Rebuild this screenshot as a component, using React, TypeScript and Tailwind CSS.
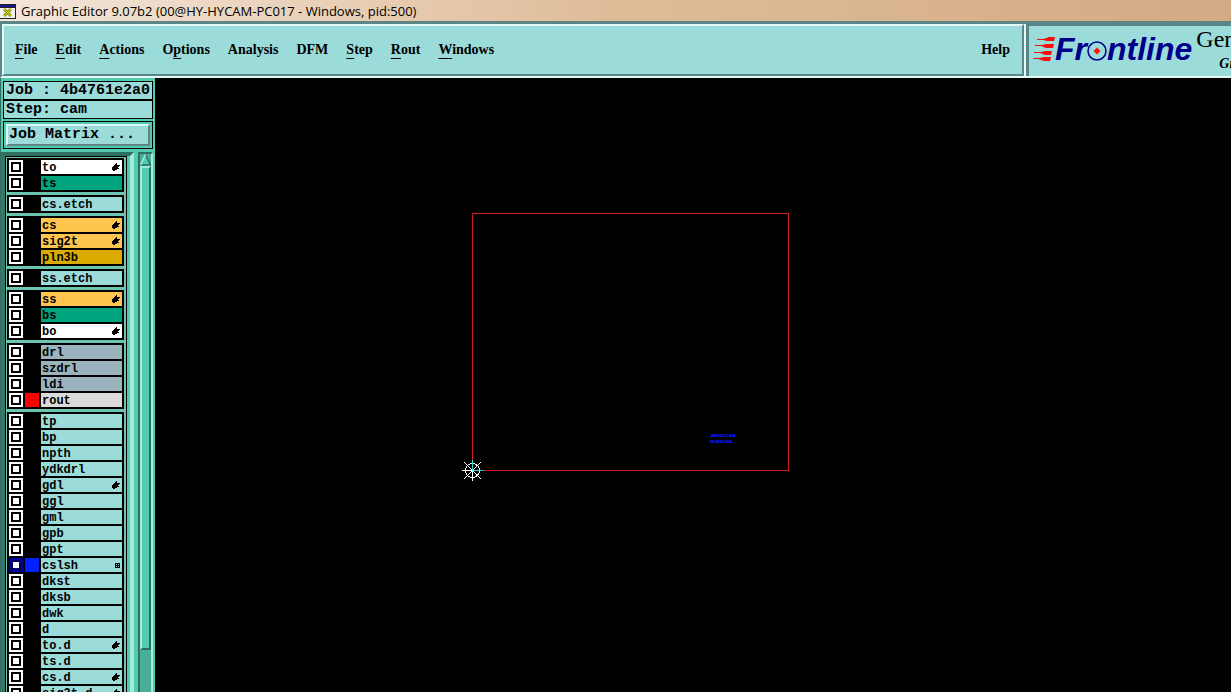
import React from "react";

type Mark = "hand" | "grid";
type Layer = { name: string; tone: string; mark?: Mark; swatch?: string; active?: boolean };

const AQUA = "bg-[#9bdbda]";
const GOLD = "bg-[#ffc54f]";
const GRAY = "bg-[#9ab3bd]";
const GREEN = "bg-[#00a47d]";

const aqua = (name: string, mark?: Mark): Layer => ({ name, tone: AQUA, mark });

const groups: Layer[][] = [
  [
    { name: "to", tone: "bg-white", mark: "hand" },
    { name: "ts", tone: GREEN },
  ],
  [aqua("cs.etch")],
  [
    { name: "cs", tone: GOLD, mark: "hand" },
    { name: "sig2t", tone: GOLD, mark: "hand" },
    { name: "pln3b", tone: "bg-[#dbab00]" },
  ],
  [aqua("ss.etch")],
  [
    { name: "ss", tone: GOLD, mark: "hand" },
    { name: "bs", tone: GREEN },
    { name: "bo", tone: "bg-white", mark: "hand" },
  ],
  [
    { name: "drl", tone: GRAY },
    { name: "szdrl", tone: GRAY },
    { name: "ldi", tone: GRAY },
    { name: "rout", tone: "bg-[#dadada]", swatch: "bg-[#ff0000]" },
  ],
  [
    aqua("tp"),
    aqua("bp"),
    aqua("npth"),
    aqua("ydkdrl"),
    aqua("gdl", "hand"),
    aqua("ggl"),
    aqua("gml"),
    aqua("gpb"),
    aqua("gpt"),
    { name: "cslsh", tone: AQUA, mark: "grid", swatch: "bg-[#0020ff]", active: true },
    aqua("dkst"),
    aqua("dksb"),
    aqua("dwk"),
    aqua("d"),
    aqua("to.d", "hand"),
    aqua("ts.d"),
    aqua("cs.d", "hand"),
    aqua("sig2t.d", "hand"),
  ],
];

const menus: { label: string; key: number }[] = [
  { label: "File", key: 0 },
  { label: "Edit", key: 0 },
  { label: "Actions", key: 0 },
  { label: "Options", key: 1 },
  { label: "Analysis", key: -1 },
  { label: "DFM", key: -1 },
  { label: "Step", key: 0 },
  { label: "Rout", key: 0 },
  { label: "Windows", key: 0 },
];

function HandIcon() {
  return (
    <svg width="8" height="8" viewBox="0 0 8 8" shapeRendering="crispEdges" aria-hidden="true">
      <path
        d="M4 0h1v2h3v1h-1v1h-1v1h1v1h-2v1h-2v1h-2v-1h-1v-3h1v-1h1v-1h1v-1h1z"
        fill="#000"
      />
    </svg>
  );
}

function GridIcon() {
  return (
    <svg width="5" height="5" viewBox="0 0 5 5" shapeRendering="crispEdges" aria-hidden="true">
      <path d="M0 0h5v5h-5zM1 1v1h1v-1zM3 1v1h1v-1zM1 3v1h1v-1zM3 3v1h1v-1z" fill="#000" fillRule="evenodd" />
    </svg>
  );
}

function WindowIcon() {
  return (
    <svg width="16" height="16" viewBox="0 0 16 16" shapeRendering="crispEdges" aria-hidden="true">
      <rect x="0" y="0" width="16" height="15" fill="#222" />
      <rect x="0" y="1" width="15" height="2" fill="#16168c" />
      <rect x="0" y="4" width="15" height="10" fill="#f4f4ee" />
      <path d="M4 5l7 7M11 5l-7 7" stroke="#8e9008" strokeWidth="3" shapeRendering="auto" />
      <path d="M4 5l7 7M11 5l-7 7" stroke="#e0e030" strokeWidth="1" shapeRendering="auto" />
    </svg>
  );
}

function MenuLabel({ label, index }: { label: string; index: number }) {
  if (index < 0) return <>{label}</>;
  return (
    <>
      {label.slice(0, index)}
      <span className="underline decoration-1 underline-offset-4">{label[index]}</span>
      {label.slice(index + 1)}
    </>
  );
}

function MenuBar() {
  return (
    <nav className="flex min-w-0 flex-1 items-center justify-between border-2 border-t-[#e4f8f6] border-l-[#e4f8f6] border-r-[#5b8587] border-b-[#5b8587] bg-[#9bdbda] pr-3 pl-[11px] text-sm font-bold">
      <div className="flex gap-[18px]">
        {menus.map((m) => (
          <button key={m.label} type="button">
            <MenuLabel label={m.label} index={m.key} />
          </button>
        ))}
      </div>
      <button type="button">Help</button>
    </nav>
  );
}

function Logo() {
  return (
    <div className="flex items-center pb-1">
      <svg width="22" height="26" viewBox="0 0 22 26" aria-hidden="true">
        <g stroke="#ff0a0a" strokeWidth="1">
          <path d="M4 3.500h10M2 9.500h10M1 16.500h10M0 22.500h10" />
        </g>
        <g fill="#ff0a0a">
          <path d="M8 3.500l6-1.500 1-1h7l-1 4h-7z M7 9.500l6-1.500h8l-1 4h-7z M6 16.500l6-1.500h7l-1 4h-6z M4 22.500l7-1.500h7l-1 4h-6z" />
        </g>
      </svg>
      <div className="flex items-center font-['Liberation_Sans',sans-serif] text-[32px] leading-8 font-bold text-[#00008b] italic">
        <span>Fr</span>
        <svg className="mt-1" width="20" height="20" viewBox="0 0 20 20" role="img" aria-label="o">
          <circle cx="10" cy="10" r="9" fill="none" stroke="#00008b" strokeWidth="1.5" />
          <path d="M10 6.500l3.500 3.500-3.500 3.500-3.500-3.500z" fill="#ff1408" />
        </svg>
        <span>ntline</span>
      </div>
    </div>
  );
}

function Brand() {
  return (
    <div className="flex w-[205px] shrink-0 gap-1 overflow-hidden border-t-2 border-l-3 border-[#5b8587] bg-[#9bdbda] pl-1">
      <Logo />
      <div className="flex shrink-0 flex-col whitespace-nowrap">
        <span className="text-2xl leading-[26px]">Genesis</span>
        <span className="pl-[23px] text-sm leading-6 font-bold italic">Graphic Station</span>
      </div>
    </div>
  );
}

function LayerRow({ layer }: { layer: Layer }) {
  return (
    <label className="flex h-3.5 gap-0.5">
      <span
        className={
          layer.active
            ? "flex size-3.5 items-center justify-center bg-[#0000a0]"
            : "flex size-3.5 items-center justify-center bg-white"
        }
      >
        <input
          type="checkbox"
          defaultChecked={layer.active}
          className="size-2.5 appearance-none border-2 border-black bg-white checked:border-[#000060]"
        />
      </span>
      <span className={layer.swatch ? `size-3.5 ${layer.swatch}` : "size-3.5"} />
      <span className={`flex min-w-0 flex-1 items-center justify-between pr-0.5 pl-px ${layer.tone}`}>
        <span className="pt-0.5">{layer.name}</span>
        {layer.mark === "hand" && <HandIcon />}
        {layer.mark === "grid" && <GridIcon />}
      </span>
    </label>
  );
}

function Scrollbar() {
  return (
    <div className="flex h-full w-[15px] shrink-0 flex-col border-t-2 border-r-2 border-l-2 border-t-[#2f6f62] border-r-[#a4ecd9] border-l-[#2f6f62] bg-[#48ae98]">
      <button type="button" aria-label="Scroll up" className="bg-[#48ae98]">
        <svg width="11" height="12" viewBox="0 0 11 12" aria-hidden="true">
          <path d="M5.500 0.500L0.500 11H10.500z" fill="#52cbb0" />
          <path d="M5.500 0.500L10.500 11H0.500" stroke="#2f6f62" strokeWidth="1.500" fill="none" />
          <path d="M5.500 0.500L0.500 11" stroke="#a4ecd9" strokeWidth="1.500" />
        </svg>
      </button>
      <div className="h-[90%] border-2 border-t-[#a4ecd9] border-r-[#2f6f62] border-b-[#2f6f62] border-l-[#a4ecd9] bg-[#52cbb0]" />
    </div>
  );
}

function Sidebar() {
  return (
    <aside className="flex w-[155px] shrink-0 flex-col border-r-2 border-l border-r-[#52cbb0] border-l-[#2f6f62] bg-[#52cbb0] pt-[3px] font-['Liberation_Mono',monospace]">
      <div className="ml-0.5 flex flex-col gap-0.5 border border-black bg-black text-[15px] leading-[17px] font-bold">
        <div className="bg-[#9bdbda] pl-0.5 whitespace-pre">Job : 4b4761e2a0</div>
        <div className="bg-[#9bdbda] pl-0.5 whitespace-pre">Step: cam</div>
      </div>
      <div className="mt-0.5 ml-0.5 border border-black p-0.5">
        <button
          type="button"
          className="block w-full border-2 border-t-[#dcf6f4] border-r-[#5b8587] border-b-[#5b8587] border-l-[#dcf6f4] bg-[#9bdbda] pl-px text-left text-[15px] leading-[18px] font-bold"
        >
          Job Matrix ...
        </button>
      </div>
      <div className="mt-[3px] flex min-h-0 flex-1 gap-1">
        <div className="flex min-w-0 flex-1 overflow-hidden border-t-4 border-r-4 border-l-4 border-t-[#2f6f62] border-r-[#a4ecd9] border-l-[#3b7567] pr-[3px]">
          <div className="flex flex-1 flex-col gap-[3px] self-start border border-b-0 border-black bg-[#6cc5b0] pt-px pr-0.5 pl-px text-xs leading-[14px] font-bold">
            {groups.map((group, i) => (
              <div key={i} className="flex flex-col gap-0.5 bg-black p-0.5">
                {group.map((layer) => (
                  <LayerRow key={layer.name} layer={layer} />
                ))}
              </div>
            ))}
          </div>
        </div>
        <Scrollbar />
      </div>
    </aside>
  );
}

function Canvas() {
  return (
    <main className="min-w-0 flex-1 overflow-hidden bg-black">
      <svg width="700" height="500" viewBox="155 78 700 500" role="img" aria-label="Board profile">
        <rect x="472.500" y="213.500" width="316" height="257" fill="none" stroke="#d01c1c" />
        <g stroke="#fff" fill="none" shapeRendering="crispEdges">
          <path d="M462 470.500h21M472.500 460v21" />
          <path d="M464 462l17 17M481 462l-17 17" />
          <circle cx="472.500" cy="470.500" r="7" />
        </g>
        <path d="M472.500 460v10.500h10.500" stroke="#30d8d8" fill="none" shapeRendering="crispEdges" />
        <g
          className="font-['Liberation_Sans',sans-serif] text-[4px] font-bold"
          fill="#0018ff"
          stroke="#0018ff"
          strokeWidth="0.2"
        >
          <text x="711" y="437">4B4761.CAM</text>
          <text x="710" y="443">08.0002-001</text>
        </g>
      </svg>
    </main>
  );
}

export default function App() {
  return (
    <div className="flex h-screen flex-col overflow-hidden bg-black font-['Liberation_Serif',serif] text-black">
      <header className="flex h-[21px] shrink-0 items-center gap-[5px] bg-linear-to-r from-[#f3e6da] via-[#dfbc98] to-[#d2ab86] pt-0.5 font-['Open_Sans',sans-serif] text-[13px]">
        <WindowIcon />
        <h1>Graphic Editor 9.07b2 (00@HY-HYCAM-PC017 - Windows, pid:500)</h1>
      </header>
      <div className="flex h-[57px] shrink-0 border-t-3 border-b-2 border-l-2 border-t-[#5b8587] border-b-[#e4f8f6] border-l-[#5b8587] bg-[#e4f8f6]">
        <MenuBar />
        <div className="w-0.5" />
        <Brand />
      </div>
      <div className="flex min-h-0 flex-1">
        <Sidebar />
        <Canvas />
      </div>
    </div>
  );
}
